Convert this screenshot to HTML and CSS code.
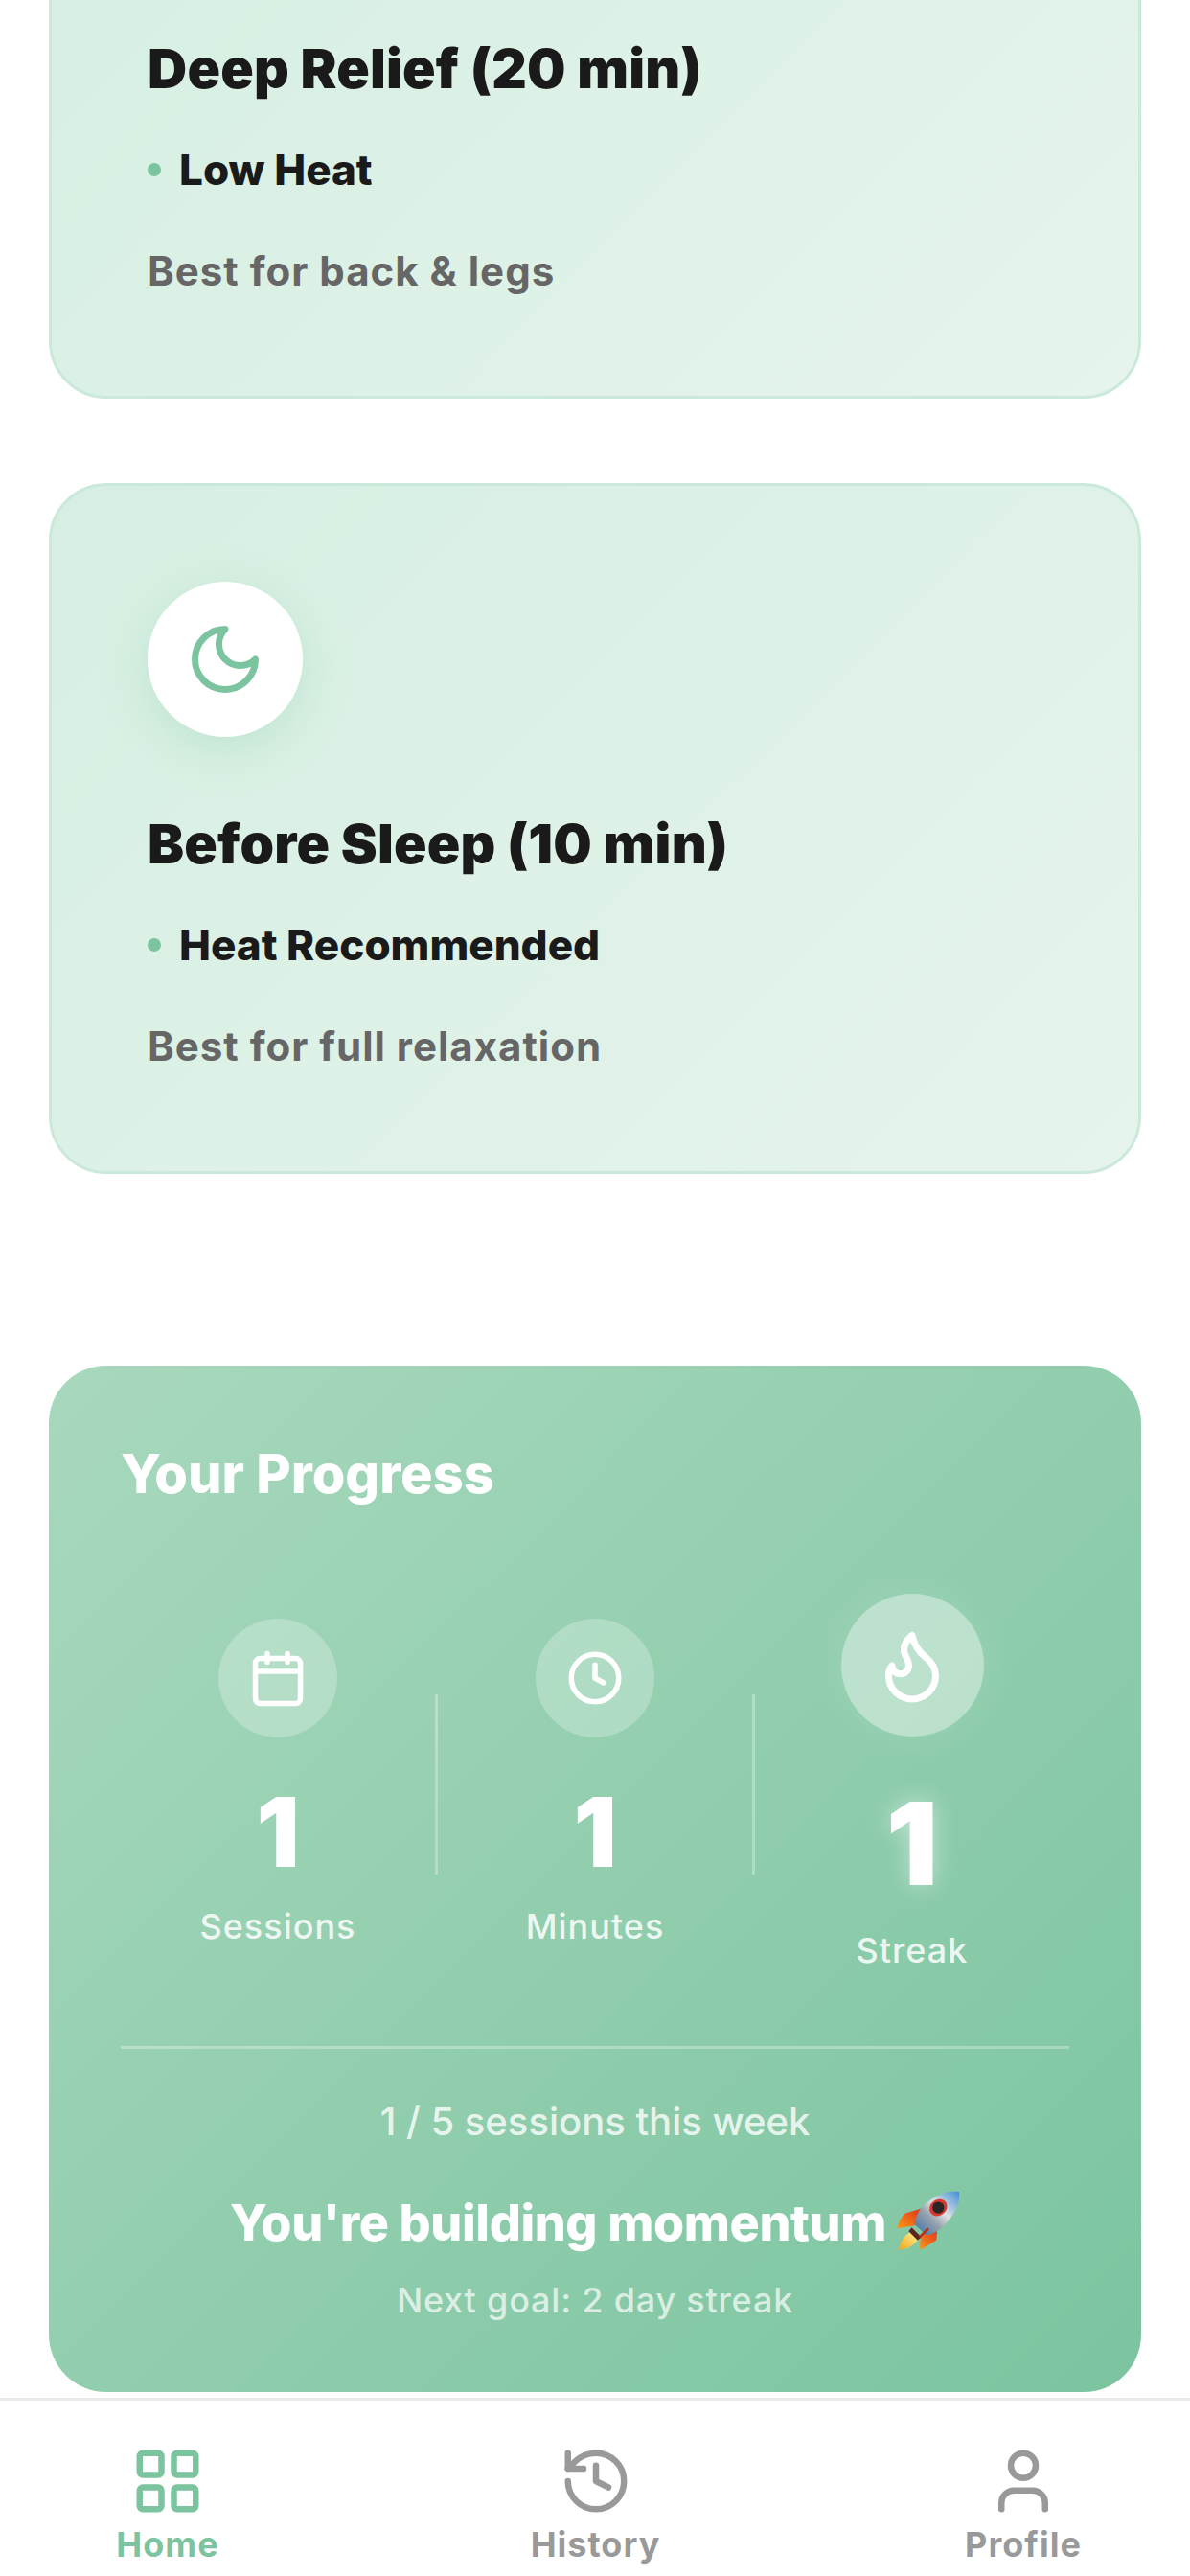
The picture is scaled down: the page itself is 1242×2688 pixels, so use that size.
FILE: index.html
```html
<!DOCTYPE html>
<html lang="en">
<head>
<meta charset="utf-8">
<title>Home</title>
<link rel="stylesheet" href="styles.css">
</head>
<body>
<div class="app">
  <main class="scroller">
    <section class="mode-card mode-card-first">
      <h2 class="mode-title">Deep Relief (20 min)</h2>
      <p class="mode-heat"><span class="dot"></span>Low Heat</p>
      <p class="mode-desc">Best for back &amp; legs</p>
    </section>
    <section class="mode-card">
      <div class="mode-icon">
        <svg class="icon-moon" viewBox="0 0 24 24"><path d="M12 3a6 6 0 0 0 9 9 9 9 0 1 1-9-9Z"/></svg>
      </div>
      <h2 class="mode-title">Before Sleep (10 min)</h2>
      <p class="mode-heat"><span class="dot"></span>Heat Recommended</p>
      <p class="mode-desc">Best for full relaxation</p>
    </section>
    <section class="progress">
      <h2 class="progress-title">Your Progress</h2>
      <div class="stats">
        <div class="stat">
          <div class="stat-icon">
            <svg class="icon-stat" viewBox="0 0 66 66"><rect x="9.5" y="12.5" width="47" height="47" rx="5"/><path d="M22 7.5v9M43 7.5v9M9.5 26h47"/></svg>
          </div>
          <div class="stat-num">1</div>
          <div class="stat-label">Sessions</div>
        </div>
        <div class="stat-divider"></div>
        <div class="stat">
          <div class="stat-icon">
            <svg class="icon-stat" viewBox="0 0 24 24"><circle cx="12" cy="12" r="9"/><path d="M12 7v5l3.2 1.8"/></svg>
          </div>
          <div class="stat-num">1</div>
          <div class="stat-label">Minutes</div>
        </div>
        <div class="stat-divider"></div>
        <div class="stat stat-hot">
          <div class="stat-icon">
            <svg class="icon-flame" viewBox="0 0 24 24"><path d="M8.5 14.5A2.5 2.5 0 0 0 11 12c0-1.38-.5-2-1-3-1.072-2.143-.224-4.054 2-6 .5 2.5 2 4.9 4 6.5 2 1.6 3 3.5 3 5.5a7 7 0 1 1-14 0c0-1.153.433-2.294 1-3a2.5 2.5 0 0 0 2.5 2.5z"/></svg>
          </div>
          <div class="stat-num">1</div>
          <div class="stat-label">Streak</div>
        </div>
      </div>
      <div class="progress-rule"></div>
      <p class="week">1 / 5 sessions this week</p>
      <p class="momentum">You're building momentum
        <svg class="rocket" viewBox="0 0 64 62">
          <defs>
            <linearGradient id="rk-body" x1="1" y1="0" x2="0" y2="1">
              <stop offset="0" stop-color="#3f8fd6"/>
              <stop offset=".42" stop-color="#dfe2e4"/>
              <stop offset=".62" stop-color="#98a4ae"/>
              <stop offset="1" stop-color="#3a6ca6"/>
            </linearGradient>
            <linearGradient id="rk-fin" x1="1" y1="0" x2="0" y2="1">
              <stop offset="0" stop-color="#e0301e"/>
              <stop offset="1" stop-color="#fb9a12"/>
            </linearGradient>
            <linearGradient id="rk-fire" x1="1" y1="0" x2="0" y2="1">
              <stop offset="0" stop-color="#fff59a"/>
              <stop offset="1" stop-color="#f2a51a"/>
            </linearGradient>
          </defs>
          <path fill="url(#rk-fin)" d="M25 18 L8 23 Q2 30 0 38 L18 35 Z"/>
          <path fill="url(#rk-fin)" d="M41 38 L40 50 L24 60 Q22 50 27 44 Z"/>
          <path fill="url(#rk-fire)" d="M16 41 L22 47 C20 55 10 59 2 60 C3 51 8 44 16 41 Z"/>
          <path fill="#5a2620" d="M15 37 L25 47 L21 50 L12 41 Z"/>
          <path fill="url(#rk-body)" d="M63 1 C52 -1 36 5 25 17 C21 22 19 28 18 34 L30 45 C36 44 43 40 48 35 C58 25 65 12 63 1 Z"/>
          <ellipse fill="#d8392c" cx="42" cy="17" rx="9.5" ry="8" transform="rotate(-38 42 17)"/>
          <circle fill="#2b2624" cx="42" cy="17" r="6"/>
          <path d="M32 38 L23 47" stroke="#b5301f" stroke-width="2.5" fill="none"/>
        </svg>
      </p>
      <p class="next-goal">Next goal: 2 day streak</p>
    </section>
  </main>
  <nav class="tabbar">
    <div class="tab tab-active">
      <svg class="tab-icon" viewBox="0 0 24 24"><rect x="3" y="3" width="7" height="7" rx="1"/><rect x="14" y="3" width="7" height="7" rx="1"/><rect x="14" y="14" width="7" height="7" rx="1"/><rect x="3" y="14" width="7" height="7" rx="1"/></svg>
      <span class="tab-label">Home</span>
    </div>
    <div class="tab">
      <svg class="tab-icon" viewBox="0 0 24 24"><path d="M3 12a9 9 0 1 0 9-9 9.75 9.75 0 0 0-6.74 2.74L3 8"/><path d="M3 3v5h5"/><path d="M12 7v5l4 2"/></svg>
      <span class="tab-label">History</span>
    </div>
    <div class="tab">
      <svg class="tab-icon" viewBox="0 0 24 24"><path d="M19 21v-2a4 4 0 0 0-4-4H9a4 4 0 0 0-4 4v2"/><circle cx="12" cy="7" r="4"/></svg>
      <span class="tab-label">Profile</span>
    </div>
  </nav>
</div>
</body>
</html>
```

FILE: styles.css
```css
* { box-sizing: border-box; }
html, body { margin: 0; padding: 0; background: #fff; }
body { font-family: Inter, "Liberation Sans", sans-serif; }
h2, p { margin: 0; }

.app {
  width: 1242px;
  height: 2688px;
  display: flex;
  flex-direction: column;
  overflow: hidden;
  background: #fff;
}
.scroller {
  flex: 1;
  min-height: 0;
  overflow: hidden;
  padding: 0 51px;
  display: flex;
  flex-direction: column;
}

.mode-card {
  flex: none;
  margin-top: 88px;
  padding: 100px 100px 105px;
  border: 3px solid #cbe9da;
  border-radius: 60px;
  background: linear-gradient(135deg, #d6efe2 0%, #e6f4ec 100%);
}
.mode-card-first { margin-top: -64px; }
.mode-icon {
  width: 162px;
  height: 162px;
  border-radius: 50%;
  background: #fff;
  display: flex;
  align-items: center;
  justify-content: center;
  margin-bottom: 79px;
  box-shadow: 0 12px 48px rgba(123, 196, 159, 0.28);
}
.icon-moon {
  width: 84px;
  height: 84px;
  fill: none;
  stroke: #7bc49f;
  stroke-width: 2;
  stroke-linecap: round;
  stroke-linejoin: round;
}
.mode-title {
  font-size: 57px;
  line-height: 66px;
  font-weight: 900;
  letter-spacing: 0.2px;
  color: #1a1a1a;
}
.mode-heat {
  display: flex;
  align-items: center;
  gap: 19px;
  margin-top: 48px;
  font-size: 44px;
  line-height: 48px;
  font-weight: 800;
  color: #1a1a1a;
}
.dot {
  width: 14px;
  height: 14px;
  border-radius: 50%;
  background: #7bc49f;
}
.mode-desc {
  margin-top: 57px;
  font-size: 42px;
  line-height: 50px;
  font-weight: 700;
  letter-spacing: 1px;
  color: #666;
}

.progress {
  flex: none;
  margin-top: 200px;
  padding: 80px 75px 74px;
  border-radius: 60px;
  background: linear-gradient(135deg, #a8d8bd 0%, #7bc49f 100%);
  color: #fff;
}
.progress-title {
  font-size: 56px;
  line-height: 66px;
  font-weight: 800;
}
.stats {
  display: flex;
  align-items: center;
  margin-top: 92px;
}
.stat {
  flex: 1;
  display: flex;
  flex-direction: column;
  align-items: center;
}
.stat-divider {
  flex: none;
  width: 3px;
  height: 188px;
  margin-top: 3px;
  background: rgba(255, 255, 255, 0.3);
}
.stat-icon {
  width: 124px;
  height: 124px;
  border-radius: 50%;
  background: rgba(255, 255, 255, 0.25);
  display: flex;
  align-items: center;
  justify-content: center;
}
.icon-stat {
  width: 66px;
  height: 66px;
  fill: none;
  stroke: #fff;
  stroke-linecap: round;
  stroke-linejoin: round;
}
.icon-stat rect, .icon-stat path { stroke-width: 5.5; }
.icon-stat circle, .icon-stat circle + path { stroke-width: 2; }
.icon-flame {
  width: 84px;
  height: 84px;
  fill: none;
  stroke: #fff;
  stroke-width: 2;
  stroke-linecap: round;
  stroke-linejoin: round;
}
.stat-num {
  margin-top: 39px;
  font-size: 100px;
  line-height: 119px;
  font-weight: 900;
}
.stat-label {
  margin-top: 17px;
  font-size: 36px;
  line-height: 44px;
  font-weight: 500;
  letter-spacing: 1px;
  color: rgba(255, 255, 255, 0.85);
}
.stat-hot .stat-icon {
  width: 149px;
  height: 149px;
  background: rgba(255, 255, 255, 0.4);
  box-shadow: 0 0 40px rgba(255, 255, 255, 0.12);
}
.stat-hot .stat-num {
  margin-top: 40px;
  font-size: 120px;
  line-height: 144px;
  text-shadow: 0 0 24px rgba(255, 255, 255, 0.5);
}
.progress-rule {
  height: 3px;
  margin-top: 78px;
  background: rgba(255, 255, 255, 0.3);
}
.week {
  margin-top: 52px;
  font-size: 40px;
  line-height: 48px;
  font-weight: 500;
  text-align: center;
  color: rgba(255, 255, 255, 0.8);
}
.momentum {
  margin-top: 48px;
  font-size: 52px;
  line-height: 66px;
  font-weight: 800;
  letter-spacing: -0.4px;
  text-align: center;
}
.rocket {
  display: inline-block;
  width: 66px;
  height: 64px;
  vertical-align: -12px;
}
.next-goal {
  margin-top: 25px;
  font-size: 36px;
  line-height: 44px;
  font-weight: 500;
  letter-spacing: 0.8px;
  text-align: center;
  color: rgba(255, 255, 255, 0.7);
}

.tabbar {
  flex: none;
  height: 186px;
  border-top: 3px solid #eaeaea;
  background: #fff;
  padding: 45px 84px 0 85px;
  display: flex;
  justify-content: space-between;
  align-items: flex-start;
}
.tab {
  width: 180px;
  display: flex;
  flex-direction: column;
  align-items: center;
  gap: 5px;
  color: #999;
}
.tab-active { color: #7bc49f; }
.tab-icon {
  width: 78px;
  height: 78px;
  fill: none;
  stroke: currentColor;
  stroke-width: 2;
  stroke-linecap: round;
  stroke-linejoin: round;
}
.tab-label {
  font-size: 36px;
  line-height: 44px;
  font-weight: 700;
  letter-spacing: 1px;
}
```
